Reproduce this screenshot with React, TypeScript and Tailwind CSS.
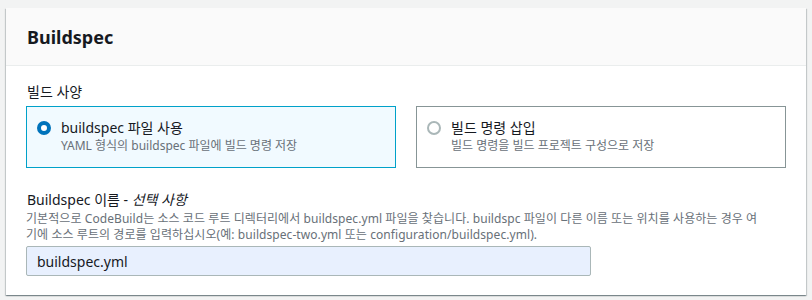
import React from "react";

const font = { fontFamily: '"Noto Sans", "Noto Sans CJK KR", sans-serif' };

function Radio({ checked }: { checked: boolean }) {
  return checked ? (
    <span className="mt-[3px] block h-[14px] w-[14px] shrink-0 rounded-full border-[4px] border-[#0073bb] bg-white" />
  ) : (
    <span className="mt-[3px] block h-[14px] w-[14px] shrink-0 rounded-full border-[2px] border-[#aab7b8] bg-white" />
  );
}

function Tile({ checked, title, desc }: { checked: boolean; title: string; desc: string }) {
  return (
    <div
      className={
        checked
          ? "flex h-[62px] items-start gap-[10px] border border-[#00a1c9] bg-[#f1faff] pl-[10px] pr-4 pt-[11px]"
          : "flex h-[62px] items-start gap-[10px] border border-[#879596] bg-white pl-[10px] pr-4 pt-[11px]"
      }
    >
      <Radio checked={checked} />
      <div className="flex flex-col">
        <span className="text-[14px] leading-[20px] text-[#16191f]">{title}</span>
        <span className="text-[12px] leading-[16px] text-[#687078]">{desc}</span>
      </div>
    </div>
  );
}

export default function App() {
  return (
    <div className="min-h-[300px] bg-[#f2f3f3] pl-[6px] pr-[6px] pt-[8px]" style={font}>
      <div className="w-[800px] bg-white shadow-[0_1px_1px_0_rgba(0,28,36,0.3),1px_1px_1px_0_rgba(0,28,36,0.15),-1px_1px_1px_0_rgba(0,28,36,0.15)]">
        <div className="flex h-[58px] items-center border-b border-[#eaeded] bg-[#fafafa] px-[21px]">
          <h2 className="text-[18px] font-bold leading-[22px] text-[#16191f]">Buildspec</h2>
        </div>
        <div className="flex flex-col px-[20px] pb-[19px] pt-[15px]">
          <div className="pl-[1px] text-[14px] leading-[22px] text-[#16191f]">빌드 사양</div>
          <div className="mt-[3px] grid grid-cols-2 gap-[20px]">
            <Tile checked title="buildspec 파일 사용" desc="YAML 형식의 buildspec 파일에 빌드 명령 저장" />
            <Tile checked={false} title="빌드 명령 삽입" desc="빌드 명령을 빌드 프로젝트 구성으로 저장" />
          </div>
          <div className="mt-[21px] pl-[1px] text-[14px] leading-[22px] text-[#16191f]">
            Buildspec 이름 - <i>선택 사항</i>
          </div>
          <div className="text-[12px] leading-[16px] tracking-[0.07px] text-[#687078]">
            <div className="whitespace-nowrap">
              기본적으로 CodeBuild는 소스 코드 루트 디렉터리에서 buildspec.yml 파일을 찾습니다. buildspc 파일이 다른 이름 또는 위치를 사용하는 경우 여
            </div>
            <div className="whitespace-nowrap">
              기에 소스 루트의 경로를 입력하십시오(예: buildspec-two.yml 또는 configuration/buildspec.yml).
            </div>
          </div>
          <div className="mt-[3px] flex h-[30px] w-[565px] items-center rounded-[2px] border border-[#aab7b8] bg-[#e8f0fe] px-[10px] text-[14px] text-[#16191f]">
            buildspec.yml
          </div>
        </div>
      </div>
    </div>
  );
}
